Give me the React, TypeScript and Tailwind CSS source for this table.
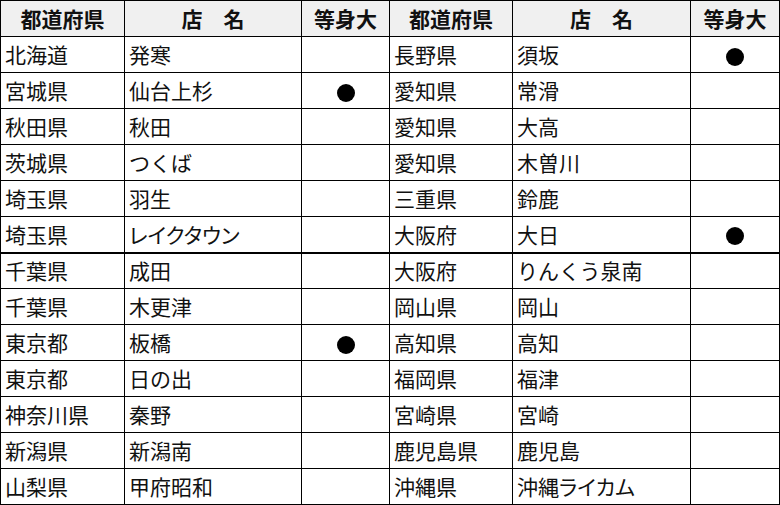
const rows: [string, string, boolean, string, string, boolean][] = [
  ['北海道', '発寒', false, '長野県', '須坂', true],
  ['宮城県', '仙台上杉', true, '愛知県', '常滑', false],
  ['秋田県', '秋田', false, '愛知県', '大高', false],
  ['茨城県', 'つくば', false, '愛知県', '木曽川', false],
  ['埼玉県', '羽生', false, '三重県', '鈴鹿', false],
  ['埼玉県', 'レイクタウン', false, '大阪府', '大日', true],
  ['千葉県', '成田', false, '大阪府', 'りんくう泉南', false],
  ['千葉県', '木更津', false, '岡山県', '岡山', false],
  ['東京都', '板橋', true, '高知県', '高知', false],
  ['東京都', '日の出', false, '福岡県', '福津', false],
  ['神奈川県', '秦野', false, '宮崎県', '宮崎', false],
  ['新潟県', '新潟南', false, '鹿児島県', '鹿児島', false],
  ['山梨県', '甲府昭和', false, '沖縄県', '沖縄ライカム', false],
];

// katakana names render narrower in the source font
const kana = /[ァ-ヶ]/;

const Dot = () => <span className="inline-block h-[18px] w-[18px] rounded-full bg-black align-middle" />;

export default function App() {
  const th = 'border border-black bg-[#f0f0f0] font-bold text-center';
  const td = 'border border-black pl-[4px] text-left';
  const name = (s: string) => (kana.test(s) ? "[font-feature-settings:'palt']" : '');
  return (
    <div
      className="h-[505px] w-[780px] bg-white text-[21px] leading-none text-[#111]"
      style={{ fontFamily: '"Noto Sans CJK JP", "Noto Sans", sans-serif' }}
    >
      <table className="w-[780px] table-fixed border-collapse">
        <colgroup>
          <col className="w-[124px]" />
          <col className="w-[177px]" />
          <col className="w-[88px]" />
          <col className="w-[123px]" />
          <col className="w-[178px]" />
          <col className="w-[89px]" />
        </colgroup>
        <thead>
          <tr className="h-[36px]">
            <th className={th}>都道府県</th>
            <th className={th}>店　名</th>
            <th className={th}>等身大</th>
            <th className={th}>都道府県</th>
            <th className={th}>店　名</th>
            <th className={th}>等身大</th>
          </tr>
        </thead>
        <tbody>
          {rows.map((r, i) => {
            const thick = i === 5 ? 'border-b-2' : '';
            return (
              <tr key={i} className="h-[36px]">
                <td className={`${td} ${thick}`}>{r[0]}</td>
                <td className={`${td} ${thick} ${name(r[1])}`}>{r[1]}</td>
                <td className={`border border-black text-center ${thick}`}>{r[2] && <Dot />}</td>
                <td className={`${td} ${thick}`}>{r[3]}</td>
                <td className={`${td} ${thick} ${name(r[4])}`}>{r[4]}</td>
                <td className={`border border-black text-center ${thick}`}>{r[5] && <Dot />}</td>
              </tr>
            );
          })}
        </tbody>
      </table>
    </div>
  );
}
